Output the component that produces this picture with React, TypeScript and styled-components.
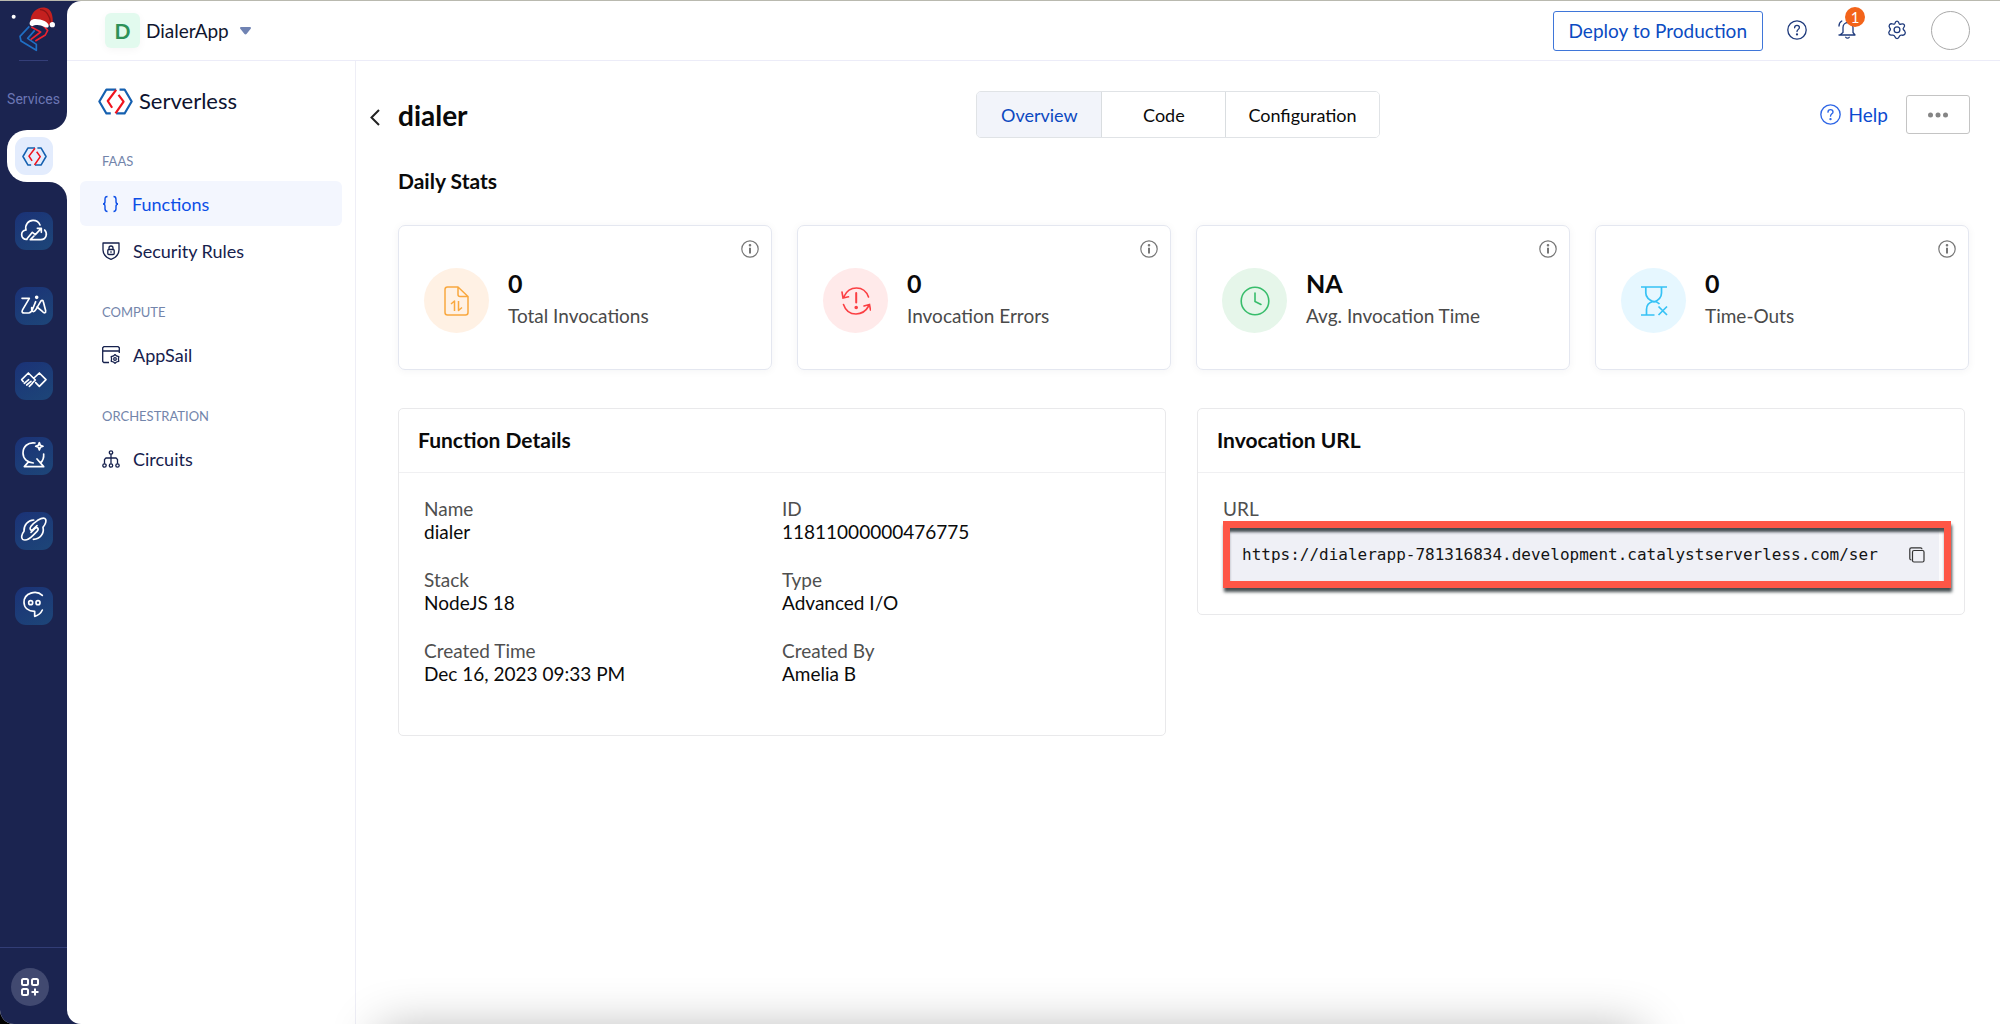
import React from "react";
import styled, { createGlobalStyle, css } from "styled-components";

const navy = "#1b2450";

const GlobalStyle = createGlobalStyle`
  *, *::before, *::after { box-sizing: border-box; }
  body { margin: 0; background: #fff; font-family: Lato, "Open Sans", sans-serif; color: #0a0a0a; }
  button, input { font: inherit; color: inherit; }
  button { margin: 0; padding: 0; border: 0; background: none; cursor: pointer; }
  h1, h2, h3, p, ul, dl, dd { margin: 0; padding: 0; }
  ul { list-style: none; }
  a { color: inherit; text-decoration: none; }
  svg { display: block; flex: none; }
`;

/* ---------- shell ---------- */

const Shell = styled.div`
  display: grid;
  grid-template-columns: 67px 1fr;
  min-height: 100vh;
  border-top: 1px solid #b9b9af;
  background: #000;
`;

const Rail = styled.nav`
  display: flex;
  flex-direction: column;
  background: #fff;
  border-bottom-left-radius: 14px;
  overflow: hidden;
`;

const RailTop = styled.div`
  display: flex;
  flex-direction: column;
  align-items: center;
  height: 129px;
  padding-top: 6px;
  background: ${navy};
  border-bottom-right-radius: 18px;
`;

const RailDivider = styled.hr`
  width: 29px;
  height: 1px;
  margin: 8px 0 29px;
  border: 0;
  background: #343e78;
`;

const RailLabel = styled.p`
  font: 14px/18px Roboto, sans-serif;
  color: #6b76b4;
`;

const RailActive = styled.div`
  padding-left: 7px;
  background: ${navy};
`;

const RailNotch = styled.div`
  display: flex;
  align-items: center;
  height: 52px;
  padding-left: 8px;
  background: #fff;
  border-radius: 20px 0 0 20px;
`;

const RailBottom = styled.div`
  flex: 1;
  display: flex;
  flex-direction: column;
  justify-content: space-between;
  padding-top: 30px;
  background: ${navy};
  border-top-right-radius: 18px;
`;

const RailList = styled.ul`
  display: flex;
  flex-direction: column;
  align-items: center;
  gap: 37px;
`;

const Tile = styled.a<{ $active?: boolean }>`
  display: flex;
  align-items: center;
  justify-content: center;
  width: 38px;
  height: 38px;
  border-radius: 11px;
  background: ${(p) => (p.$active ? "#e3ecfd" : "linear-gradient(150deg, #1b3277, #1d4678)")};
`;

const RailFoot = styled.div`
  padding: 20px 0 18px 11px;
  border-top: 1px solid #323d76;
`;

const RoundButton = styled.button`
  display: flex;
  align-items: center;
  justify-content: center;
  width: 38px;
  height: 38px;
  border-radius: 50%;
  background: #414970;
`;

const StageBack = styled.div`
  display: flex;
  background: ${navy};
`;

const Stage = styled.div`
  flex: 1;
  display: flex;
  flex-direction: column;
  background: #fff;
  border-radius: 14px 0 0 14px;
`;

const Body = styled.div`
  flex: 1;
  display: grid;
  grid-template-columns: 289px 1fr;
`;

/* ---------- header ---------- */

const Header = styled.header`
  display: flex;
  align-items: center;
  justify-content: space-between;
  height: 60px;
  padding: 0 30px 0 38px;
  border-bottom: 1px solid #ececf8;
`;

const ProjectSwitch = styled.button`
  display: flex;
  align-items: center;
  font-size: 19px;
  line-height: 24px;
  color: #10162f;
`;

const ProjectLetter = styled.span`
  display: flex;
  align-items: center;
  justify-content: center;
  width: 35px;
  height: 35px;
  margin-right: 6px;
  border-radius: 6px;
  background: #e2faee;
  box-shadow: 0 2px 8px rgba(0, 0, 0, 0.04);
  color: #2e9158;
  font-size: 21px;
  font-weight: 700;
`;

const Caret = styled.svg`
  margin-left: 11px;
`;

const HeaderTools = styled.div`
  display: flex;
  align-items: center;
  gap: 24px;
`;

const DeployButton = styled.button`
  height: 40px;
  padding: 0 15px;
  border: 1px solid #3f76d9;
  border-radius: 3px;
  color: #0b4bc2;
  font-size: 19px;
  line-height: 24px;
`;

const IconGroup = styled.div`
  display: flex;
  align-items: center;
  gap: 31px;
  padding-bottom: 2px;
`;

const IconButton = styled.button`
  position: relative;
  display: flex;
`;

const Badge = styled.span`
  position: absolute;
  top: -13px;
  right: -9px;
  width: 20px;
  height: 20px;
  border-radius: 50%;
  background: #f3641a;
  color: #fff;
  font-size: 15px;
  line-height: 20px;
  text-align: center;
`;

const Avatar = styled.button`
  width: 39px;
  height: 39px;
  border: 1px solid #a9a9a9;
  border-radius: 50%;
`;

/* ---------- side menu ---------- */

const SideMenu = styled.nav`
  padding: 24px 13px;
  border-right: 1px solid #eeeef6;
`;

const Product = styled.div`
  display: flex;
  align-items: center;
  gap: 6px;
  height: 32px;
  padding-left: 18px;
  font-size: 22px;
  line-height: 26px;
  color: #0d1330;
`;

const MenuGroup = styled.section`
  margin-top: 31px;

  ${Product} + & {
    margin-top: 36px;
  }
`;

const MenuTitle = styled.h2`
  margin-bottom: 12px;
  padding-left: 22px;
  font-size: 13px;
  font-weight: 400;
  line-height: 16px;
  color: #7385ab;
`;

const MenuList = styled.ul`
  display: flex;
  flex-direction: column;
  gap: 2px;
`;

const MenuLink = styled.a<{ $active?: boolean }>`
  display: flex;
  align-items: center;
  gap: 13px;
  height: 45px;
  padding-left: 22px;
  border-radius: 6px;
  font-size: 18px;
  line-height: 22px;
  color: #16214d;
  ${(p) =>
    p.$active &&
    css`
      background: #f3f6fe;
      color: #0c4ee6;
    `}
`;

/* ---------- page ---------- */

const Page = styled.main`
  padding: 30px 31px 40px 42px;
`;

const TitleBar = styled.div`
  display: grid;
  grid-template-columns: 1fr auto 1fr;
  align-items: center;
  margin: 0 -17px 0 -28px;
`;

const TitleSide = styled.div`
  display: flex;
  align-items: center;
  gap: 18px;
`;

const BackButton = styled.button`
  display: flex;
  padding-top: 6px;
`;

const PageTitle = styled.h1`
  font-size: 28px;
  line-height: 32px;
`;

const TitleActions = styled.div`
  display: flex;
  align-items: center;
  justify-content: flex-end;
  gap: 18px;
  padding-right: 16px;
`;

const HelpLink = styled.a`
  display: flex;
  align-items: center;
  gap: 8px;
  color: #0c4ad0;
  font-size: 19px;
  line-height: 24px;
`;

const MoreButton = styled.button`
  display: flex;
  align-items: center;
  justify-content: center;
  width: 64px;
  height: 39px;
  border: 1px solid #c4c4c4;
  border-radius: 3px;
`;

const Tabs = styled.div`
  display: flex;
  border: 1px solid #e0e3e6;
  border-radius: 5px;
  overflow: hidden;
`;

const Tab = styled.button<{ $active?: boolean }>`
  min-width: 124px;
  height: 45px;
  padding: 0 22px;
  font-size: 18px;
  line-height: 22px;
  background: ${(p) => (p.$active ? "#f2f4fa" : "#fff")};
  color: ${(p) => (p.$active ? "#0b48c0" : "#0a0a0a")};

  & + & {
    border-left: 1px solid #d9dde0;
  }
`;

const SectionTitle = styled.h2`
  margin: 30px 0 31px;
  font-size: 21px;
  line-height: 26px;
`;

const Stats = styled.div`
  display: grid;
  grid-template-columns: repeat(4, 1fr);
  gap: 25px;
`;

const StatCard = styled.article`
  display: flex;
  align-items: flex-start;
  height: 145px;
  padding: 14px 12px 0 25px;
  border: 1px solid #e4e7f0;
  border-radius: 7px;
  box-shadow: 0 1px 8px rgba(20, 30, 60, 0.05);
`;

const StatIcon = styled.span<{ $tint: string }>`
  display: flex;
  align-items: center;
  justify-content: center;
  width: 65px;
  height: 65px;
  margin-top: 28px;
  border-radius: 50%;
  background: ${(p) => p.$tint};
`;

const StatText = styled.div`
  flex: 1;
  margin: 26px 0 0 19px;
`;

const StatValue = styled.p`
  font-size: 25px;
  font-weight: 700;
  line-height: 34px;
`;

const StatLabel = styled.h3`
  font-size: 19px;
  font-weight: 400;
  line-height: 32px;
  color: #4a4a4a;
`;

const InfoButton = styled.button`
  display: flex;
`;

const Panels = styled.div`
  display: grid;
  grid-template-columns: 1fr 1fr;
  align-items: start;
  gap: 31px;
  margin: 38px 4px 0 0;
`;

const Panel = styled.section`
  min-width: 0;
  border: 1px solid #e9e9eb;
  border-radius: 5px;
`;

const PanelTitle = styled.h2`
  padding: 18px 19px 19px;
  border-bottom: 1px solid #f0f0f2;
  font-size: 21px;
  line-height: 26px;
`;

const Details = styled.dl`
  display: grid;
  grid-template-columns: 1fr 1fr;
  row-gap: 25px;
  padding: 24px 25px 50px;
  font-size: 19px;
  line-height: 23px;
`;

const Term = styled.dt`
  color: #4f4f4f;
`;

const UrlBody = styled.div`
  padding: 24px 13px 26px 25px;
`;

const UrlLabel = styled.label`
  display: block;
  font-size: 19px;
  line-height: 24px;
  color: #4f4f4f;
`;

const UrlFrame = styled.div`
  padding-right: 5px;
  border: 7px solid #fe5646;
  background: linear-gradient(to left, #fbfbfd 5px, #eff0f6 5px);
  box-shadow: 1px 4px 3px rgba(38, 48, 52, 0.85), inset 0 5px 3px -1px rgba(38, 48, 52, 0.85);
`;

const UrlField = styled.div`
  display: flex;
  align-items: center;
  height: 53px;
  padding: 0 14px 0 12px;
`;

const UrlInput = styled.input`
  flex: 1;
  min-width: 0;
  margin-right: 25px;
  padding: 0;
  border: 0;
  outline: 0;
  background: none;
  font: 16px/22px "DejaVu Sans Mono", monospace;
  color: #141414;
`;

/* Soft shade rising from the lower edge of the window */
const BottomShade = styled.div`
  position: fixed;
  left: 19%;
  right: 18%;
  bottom: -106px;
  height: 100px;
  box-shadow: 0 0 50px rgba(0, 0, 0, 0.3);
  pointer-events: none;
`;

/* ---------- drawings ---------- */

const ServerlessMark = ({ width }: { width: number }) => (
  <svg width={width} height={Math.round(width * 0.76)} viewBox="0 0 104 79" fill="none" strokeWidth="6.5" strokeLinejoin="round">
    <path d="M54 4H25L4 39.500 25 75H38M64 4H79L100 39.500 79 75H54" stroke="#1560b0" />
    <path d="M54 5 29 38 42 58M61 20 76 40 52 75" stroke="#f0141e" />
  </svg>
);

const BrandMark = () => (
  <svg width="45" height="45" viewBox="33 22 135 135" fill="none" strokeLinejoin="round">
    <circle cx="41" cy="51" r="6" fill="#fff" />
    <path d="M88 80 60 110 63 124 109 152V134L83 116 104 92" stroke="#1f6fc4" strokeWidth="5" />
    <path d="M112 70 128 76 143 92 136 106 106 124M94 82 122 97 92 120" stroke="#ee2330" strokeWidth="5" />
    <path d="M92 66C90 40 112 20 136 24C152 27 160 44 158 70L144 78C136 66 112 60 92 66Z" fill="#c4201f" />
    <path d="M120 30C138 30 150 48 152 70" stroke="#8f1416" strokeWidth="4" />
    <path d="M90 76C86 66 94 58 106 58C126 58 146 68 146 78C146 86 138 84 134 82C120 74 106 74 96 80Z" fill="#fff" />
    <circle cx="157" cy="75" r="8" fill="#fff" />
  </svg>
);

const TileSvg = ({ children }: { children: React.ReactNode }) => (
  <svg width="38" height="38" viewBox="0 0 114 114" fill="none" stroke="#fff" strokeWidth="5" strokeLinecap="round" strokeLinejoin="round">
    {children}
  </svg>
);

const services = [
  {
    name: "Cloud Scale",
    art: (
      <path d="M36 82C27 83 20 77 20 68C20 60 26 55 33 54C29 38 40 25 54 25C64 25 72 31 75 39M36 80 52 61 61 68 78 50M67 49H79V61M89 54C98 64 95 83 77 83H46L57 72" />
    ),
  },
  {
    name: "Zia",
    art: (
      <>
        <path d="M21 34H43L23 68C19 75 22 78 28 78H41C47 78 50 73 53 66L62 44M50 62C49 76 57 77 63 67L77 43C80 39 84 39 85 44L92 71C93 79 87 79 83 74L66 60" />
        <circle cx="65" cy="31" r="3" fill="#fff" />
      </>
    ),
  },
  {
    name: "Signals",
    art: <path d="M25 59 20 53 40 33 61 54 52 63M57 48 73 33 93 53 73 73 62 62M28 64 41 53M35 69 48 58M43 73 52 64" />,
  },
  {
    name: "Convo",
    art: (
      <path d="M60 18C38 15 24 29 24 48C24 66 38 77 55 78M86 51C87 62 83 72 76 78M41 74 28 89H86L66 66M73 17 76 25 84 28 76 31 73 39 70 31 62 28 70 25Z" />
    ),
  },
  {
    name: "Slate",
    art: (
      <path d="M56 24C38 25 26 40 27 58C19 68 18 78 23 82C31 87 44 80 54 70L66 58C73 50 68 44 60 49L48 61M68 25C80 18 89 17 92 22C95 29 90 38 84 46C88 64 76 82 55 82M68 25C60 30 52 38 48 43C42 51 47 58 54 52L66 41" />
    ),
  },
  {
    name: "Chat",
    art: (
      <>
        <path d="M82 25C64 8 27 17 27 46C27 63 40 73 59 73V88C70 85 78 78 82 69" />
        <circle cx="47" cy="47" r="6" />
        <circle cx="69" cy="47" r="6" />
      </>
    ),
  },
];

const GridPlus = () => (
  <svg width="18" height="18" viewBox="0 0 18 18" fill="none" stroke="#fff" strokeWidth="2">
    <rect x="1" y="1" width="6" height="6" rx="1.500" />
    <rect x="11" y="1" width="6" height="6" rx="1.500" />
    <rect x="1" y="11" width="6" height="6" rx="1.500" />
    <path d="M14 10.500V17.500M10.500 14H17.500" />
  </svg>
);

const QuestionIcon = ({ size, color }: { size: number; color: string }) => (
  <svg width={size} height={size} viewBox="0 0 20 20" fill="none" stroke={color} strokeWidth="1.300" strokeLinecap="round">
    <circle cx="10" cy="10" r="9.200" />
    <path d="M7.600 7.800C7.600 6.300 8.600 5.300 10 5.300S12.400 6.200 12.400 7.500C12.400 9.300 10 9.500 10 11.600" />
    <circle cx="10" cy="14.400" r="0.500" fill={color} />
  </svg>
);

const BellIcon = () => (
  <svg width="18" height="19" viewBox="0 0 18 19" fill="none" stroke="#1e3a7c" strokeWidth="1.300" strokeLinecap="round" strokeLinejoin="round">
    <path d="M1 15H17L15 12.500V7.500C15 4.500 12.800 2.500 10 2.500S5 4.500 5 7.500V12.500L2 15" />
    <path d="M7.800 17.300C8.600 18.300 10.400 18.300 11.200 17.300M3.800 1C2.400 1.800 1 3.800 1 6" />
  </svg>
);

const GearIcon = () => (
  <svg width="20" height="20" viewBox="0 0 20 20" fill="none" stroke="#1e3a7c" strokeWidth="1.300" strokeLinejoin="round">
    <path d="M8 3.200C8.700 .3 11.300 .3 12 3.200C12.300 4.200 13 4.400 14 4.100C17 3 18.700 5.400 16.700 7.600C16 8.400 16 9 16.300 9.500L17.700 11C19.200 13.200 17.600 15.800 14.800 15.100C13.600 14.900 12.700 15.400 12.300 16.500C11.400 19.200 8.700 19.200 7.800 16.500C7.400 15.400 6.400 14.900 5.200 15.100C2.400 15.700 .9 13.200 2.400 11.200C3.700 10 3.700 9 2.800 8C1 5.500 3 3 5.800 4C7 4.400 7.700 4.200 8 3.200Z" />
    <circle cx="10" cy="9.700" r="2.900" />
  </svg>
);

const BracesIcon = () => (
  <svg width="17" height="18" viewBox="0 0 17 18" fill="none" stroke="currentColor" strokeWidth="1.400">
    <path d="M5.500 1.500C3.200 1.500 3 2.500 3 4.200V6.500C3 8 2.500 9 1 9C2.500 9 3 10 3 11.500V13.800C3 15.500 3.200 16.500 5.500 16.500M11.500 1.500C13.800 1.500 14 2.500 14 4.200V6.500C14 8 14.500 9 16 9C14.500 9 14 10 14 11.500V13.800C14 15.500 13.800 16.500 11.500 16.500" />
  </svg>
);

const ShieldIcon = () => (
  <svg width="18" height="18" viewBox="0 0 18 18" fill="none" stroke="currentColor" strokeWidth="1.300" strokeLinejoin="round">
    <path d="M1 1H17V8C17 12 14 15.500 9 17.300C4 15.500 1 12 1 8Z" />
    <rect x="5.800" y="7.500" width="6.400" height="5" rx="1" />
    <path d="M7 7.500V6C7 4.800 7.800 4 9 4S11 4.800 11 6V7.500M9 9.300V10.700" />
  </svg>
);

const AppWindowIcon = () => (
  <svg width="18" height="18" viewBox="0 0 18 18" fill="none" stroke="currentColor" strokeWidth="1.300" strokeLinejoin="round">
    <path d="M7 16.500H1.800L.7 15.500V1.800L1.800 .7H16.200L17.300 1.800V7M.7 5H17.300" />
    <path d="M13 8.600 14.500 9.900 16.800 10.600 16.400 13 16.800 15.300 14.500 16 13 17.300 11.500 16 9.200 15.300 9.600 13 9.200 10.600 11.500 9.900Z" />
    <circle cx="13" cy="13" r="1.300" />
  </svg>
);

const CircuitIcon = () => (
  <svg width="18" height="18" viewBox="0 0 18 18" fill="none" stroke="currentColor" strokeWidth="1.300">
    <circle cx="9" cy="2.500" r="1.700" />
    <circle cx="2.500" cy="15.500" r="1.700" />
    <circle cx="9" cy="15.500" r="1.700" />
    <circle cx="15.500" cy="15.500" r="1.700" />
    <path d="M9 4.200V13.800M2.500 13.800V9.500L4 8H14L15.500 9.500V13.800" />
  </svg>
);

const FileArrowsIcon = () => (
  <svg width="25" height="30" viewBox="0 0 25 30" fill="none" stroke="#f9a83f" strokeWidth="1.500" strokeLinejoin="round">
    <path d="M14 1H3.500C2 1 1 2 1 3.500V26.500C1 28 2 29 3.500 29H21.500C23 29 24 28 24 26.500V10.500ZM14 1V8.500C14 10 14.500 10.500 16 10.500H24" />
    <path d="M7 18 10.500 15V25M14.500 15V24.500L18 21.500" />
  </svg>
);

const ErrorCycleIcon = () => (
  <svg width="30" height="32" viewBox="0 0 30 32" fill="none" stroke="#fb3f43" strokeWidth="1.600" strokeLinecap="round">
    <path d="M27.500 12C25.500 6.500 21 3 15.500 3C10 3 5.500 6 3 11.500M1 7 2 13 7.500 11.800M2.500 19.500C4.500 25.500 9 29 15 29C20.500 29 25 26 28 20.500M29.500 25 28.500 19.500 23 21" />
    <path d="M15.200 8V17.500" strokeWidth="2" />
    <circle cx="15.200" cy="22.500" r="1" fill="#fb3f43" />
  </svg>
);

const ClockIcon = () => (
  <svg width="30" height="30" viewBox="0 0 30 30" fill="none" stroke="#38bd6b" strokeWidth="1.600" strokeLinecap="round">
    <circle cx="15" cy="15" r="13.800" />
    <path d="M15 7V15.500L21 18.500" />
  </svg>
);

const HourglassIcon = () => (
  <svg width="28" height="32" viewBox="0 0 28 32" fill="none" stroke="#36c2f5" strokeWidth="1.700">
    <path d="M1 2H27M1 30H14.500M5.800 2V8C5.800 12.500 9 15 14 17C19 15 21.500 12.500 21.500 8V2M6.500 30V24.500C6.500 20 9 17.500 13 16.500C15.500 16.300 18 17.500 19.500 19M18.500 21.500 27 30M27 21.500 18.500 30" />
  </svg>
);

const InfoIcon = () => (
  <svg width="18" height="18" viewBox="0 0 18 18" fill="none" stroke="#777" strokeWidth="1.200">
    <circle cx="9" cy="9" r="8.200" />
    <path d="M9 7.700V13.500" strokeWidth="2" />
    <circle cx="9" cy="5.200" r="0.700" fill="#777" />
  </svg>
);

const CopyIcon = () => (
  <svg width="16" height="16" viewBox="0 0 16 16" fill="none" stroke="#333" strokeWidth="1.200">
    <rect x="3.500" y="3.500" width="11.500" height="11.500" rx="1.500" />
    <path d="M2.500 13C1.400 13 .8 12.400 .8 11.500V2.300C.8 1.400 1.400 .8 2.300 .8H11.500C12.400 .8 13 1.400 13 2.300" />
  </svg>
);

/* ---------- data ---------- */

const menu = [
  {
    title: "FAAS",
    items: [
      { name: "Functions", icon: <BracesIcon />, active: true },
      { name: "Security Rules", icon: <ShieldIcon /> },
    ],
  },
  { title: "COMPUTE", items: [{ name: "AppSail", icon: <AppWindowIcon /> }] },
  { title: "ORCHESTRATION", items: [{ name: "Circuits", icon: <CircuitIcon /> }] },
];

const stats = [
  { value: "0", label: "Total Invocations", tint: "#fff1e4", icon: <FileArrowsIcon /> },
  { value: "0", label: "Invocation Errors", tint: "#ffeaea", icon: <ErrorCycleIcon /> },
  { value: "NA", label: "Avg. Invocation Time", tint: "#e6f6ea", icon: <ClockIcon /> },
  { value: "0", label: "Time-Outs", tint: "#e6f7ff", icon: <HourglassIcon /> },
];

const details = [
  ["Name", "dialer"],
  ["ID", "11811000000476775"],
  ["Stack", "NodeJS 18"],
  ["Type", "Advanced I/O"],
  ["Created Time", "Dec 16, 2023 09:33 PM"],
  ["Created By", "Amelia B"],
];

const tabs = ["Overview", "Code", "Configuration"];

export default function App() {
  return (
    <>
      <GlobalStyle />
      <Shell>
        <Rail aria-label="Services">
          <RailTop>
            <a href="#home" aria-label="Home">
              <BrandMark />
            </a>
            <RailDivider />
            <RailLabel>Services</RailLabel>
          </RailTop>
          <RailActive>
            <RailNotch>
              <Tile href="#serverless" aria-label="Serverless" $active>
                <ServerlessMark width={25} />
              </Tile>
            </RailNotch>
          </RailActive>
          <RailBottom>
            <RailList>
              {services.map((s) => (
                <li key={s.name}>
                  <Tile href="#service" aria-label={s.name}>
                    <TileSvg>{s.art}</TileSvg>
                  </Tile>
                </li>
              ))}
            </RailList>
            <RailFoot>
              <RoundButton aria-label="All services">
                <GridPlus />
              </RoundButton>
            </RailFoot>
          </RailBottom>
        </Rail>

        <StageBack>
          <Stage>
            <Header>
              <ProjectSwitch>
                <ProjectLetter>D</ProjectLetter>
                DialerApp
                <Caret width="11" height="8" viewBox="0 0 11 8" fill="#7083b3">
                  <path d="M1 0H10C11 0 11.200 1 10.700 1.700L6.500 7C6 7.600 5 7.600 4.500 7L.3 1.700C-.2 1 0 0 1 0Z" />
                </Caret>
              </ProjectSwitch>
              <HeaderTools>
                <DeployButton>Deploy to Production</DeployButton>
                <IconGroup>
                  <IconButton aria-label="Help">
                    <QuestionIcon size={20} color="#1e3a7c" />
                  </IconButton>
                  <IconButton aria-label="Notifications">
                    <BellIcon />
                    <Badge>1</Badge>
                  </IconButton>
                  <IconButton aria-label="Settings">
                    <GearIcon />
                  </IconButton>
                </IconGroup>
                <Avatar aria-label="Account" />
              </HeaderTools>
            </Header>

            <Body>
              <SideMenu aria-label="Serverless">
                <Product>
                  <ServerlessMark width={35} />
                  Serverless
                </Product>
                {menu.map((group) => (
                  <MenuGroup key={group.title}>
                    <MenuTitle>{group.title}</MenuTitle>
                    <MenuList>
                      {group.items.map((item) => (
                        <li key={item.name}>
                          <MenuLink href="#menu" $active={"active" in item}>
                            {item.icon}
                            {item.name}
                          </MenuLink>
                        </li>
                      ))}
                    </MenuList>
                  </MenuGroup>
                ))}
              </SideMenu>

              <Page>
                <TitleBar>
                  <TitleSide>
                    <BackButton aria-label="Back">
                      <svg width="10" height="17" viewBox="0 0 10 17" fill="none" stroke="#222" strokeWidth="2">
                        <path d="M9 1 1.500 8.500 9 16" />
                      </svg>
                    </BackButton>
                    <PageTitle>dialer</PageTitle>
                  </TitleSide>
                  <Tabs role="tablist">
                    {tabs.map((t, i) => (
                      <Tab key={t} role="tab" aria-selected={i === 0} $active={i === 0}>
                        {t}
                      </Tab>
                    ))}
                  </Tabs>
                  <TitleActions>
                    <HelpLink href="#help">
                      <QuestionIcon size={21} color="#2e66e6" />
                      Help
                    </HelpLink>
                    <MoreButton aria-label="More">
                      <svg width="20" height="6" viewBox="0 0 20 6" fill="#858585">
                        <circle cx="2.500" cy="3" r="2.500" />
                        <circle cx="10" cy="3" r="2.500" />
                        <circle cx="17.500" cy="3" r="2.500" />
                      </svg>
                    </MoreButton>
                  </TitleActions>
                </TitleBar>

                <SectionTitle>Daily Stats</SectionTitle>
                <Stats>
                  {stats.map((s) => (
                    <StatCard key={s.label}>
                      <StatIcon $tint={s.tint}>{s.icon}</StatIcon>
                      <StatText>
                        <StatValue>{s.value}</StatValue>
                        <StatLabel>{s.label}</StatLabel>
                      </StatText>
                      <InfoButton aria-label={`About ${s.label}`}>
                        <InfoIcon />
                      </InfoButton>
                    </StatCard>
                  ))}
                </Stats>

                <Panels>
                  <Panel>
                    <PanelTitle>Function Details</PanelTitle>
                    <Details>
                      {details.map(([term, value]) => (
                        <div key={term}>
                          <Term>{term}</Term>
                          <dd>{value}</dd>
                        </div>
                      ))}
                    </Details>
                  </Panel>
                  <Panel>
                    <PanelTitle>Invocation URL</PanelTitle>
                    <UrlBody>
                      <UrlLabel htmlFor="invocation-url">URL</UrlLabel>
                      <UrlFrame>
                        <UrlField>
                          <UrlInput
                            id="invocation-url"
                            readOnly
                            defaultValue="https://dialerapp-781316834.development.catalystserverless.com/ser"
                          />
                          <button aria-label="Copy URL">
                            <CopyIcon />
                          </button>
                        </UrlField>
                      </UrlFrame>
                    </UrlBody>
                  </Panel>
                </Panels>
              </Page>
            </Body>
          </Stage>
        </StageBack>
      </Shell>
      <BottomShade />
    </>
  );
}
